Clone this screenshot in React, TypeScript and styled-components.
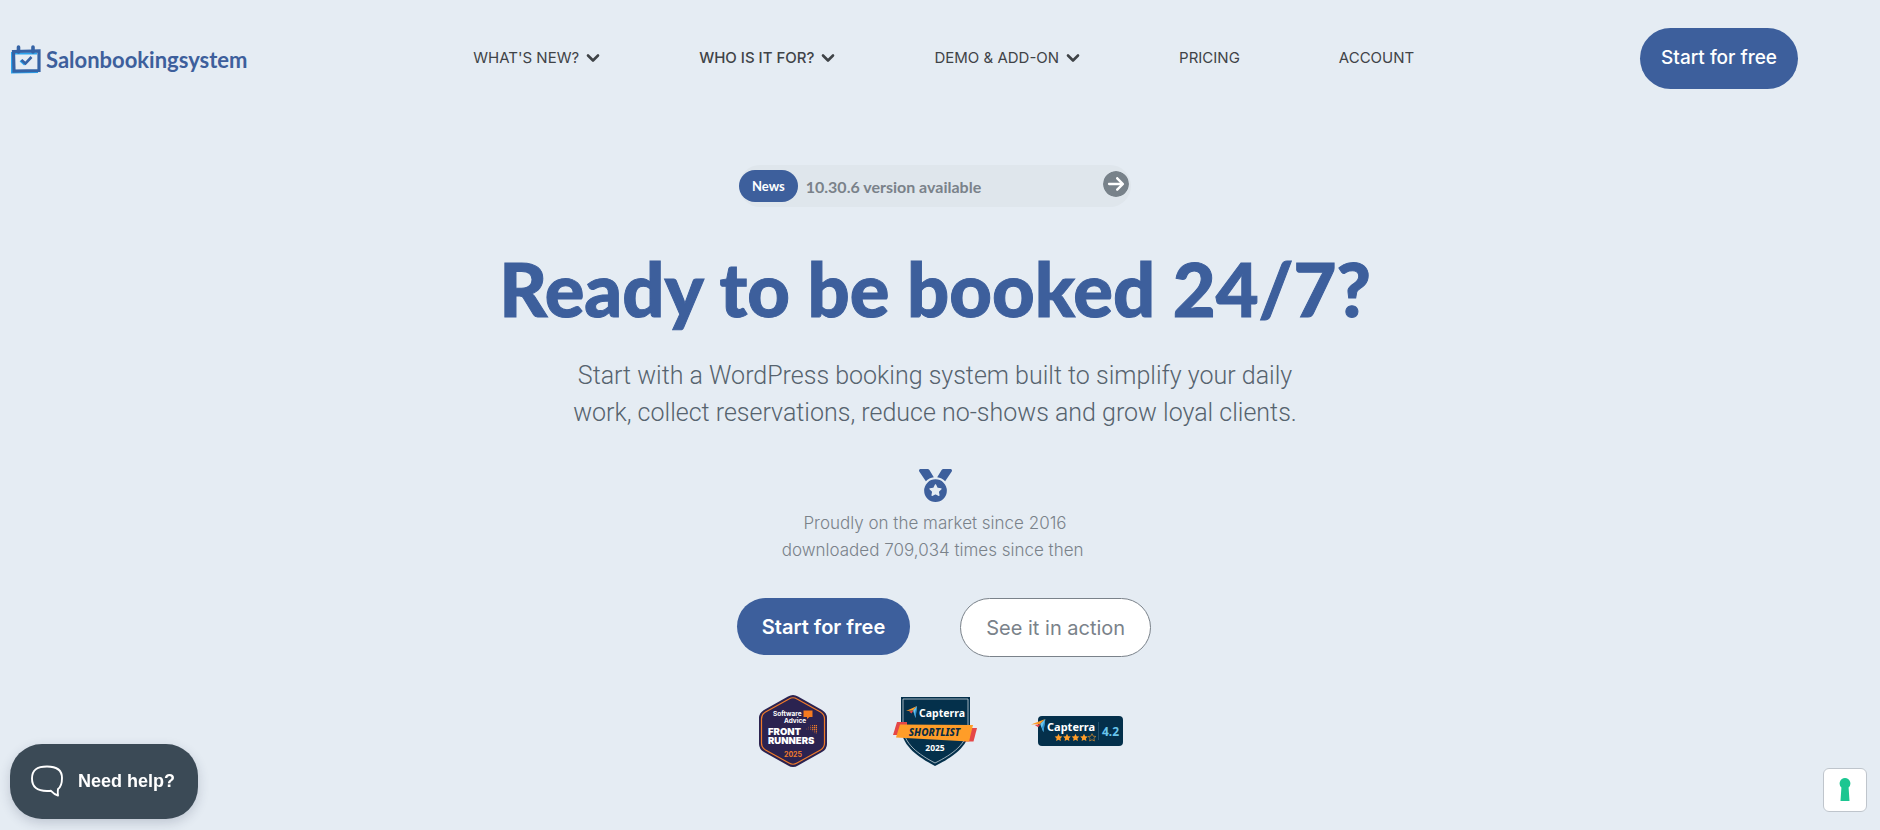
import React from 'react';
import styled, { createGlobalStyle, css } from 'styled-components';
import { FaMedal, FaCircleArrowRight } from 'react-icons/fa6';

const color = {
  page: '#e5ecf3',
  brand: '#3d5f9c',
  ink: '#3f4347',
  muted: '#7a828a',
  slate: '#3b4a56',
};

const GlobalStyle = createGlobalStyle`
  *, *::before, *::after { box-sizing: border-box; }
  html { background: ${color.page}; }
  body { margin: 0; font-family: Inter, sans-serif; color: ${color.ink}; }
  a { color: inherit; text-decoration: none; }
  button { font-family: inherit; cursor: pointer; }
  h1, p, ul { margin: 0; padding: 0; }
`;

const Header = styled.header`
  display: flex;
  align-items: center;
  justify-content: space-between;
  padding: 28px 82px 0 10px;
`;

const Logo = styled.a`
  display: flex;
  align-items: center;
  gap: 4px;
  color: ${color.brand};
  font: 700 22px/32px Lato, sans-serif;
`;

const LogoText = styled.span`
  padding-top: 3px;
`;

const Menu = styled.ul`
  display: flex;
  gap: 99px;
  padding-bottom: 2px;
  list-style: none;
`;

const MenuLink = styled.a<{ $active?: boolean }>`
  display: flex;
  align-items: center;
  gap: 7px;
  font-size: 15px;
  line-height: 20px;
  font-weight: ${p => (p.$active ? 500 : 400)};
`;

const PillButton = styled.button<{ $variant?: 'header' | 'solid' | 'outline' }>`
  border: 0;
  border-radius: 31px;
  background: ${color.brand};
  color: #fff;
  white-space: nowrap;
  ${p =>
    p.$variant === 'header' &&
    css`
      padding: 0 21px 2px;
      font-size: 19px;
      font-weight: 500;
      line-height: 59px;
    `}
  ${p =>
    p.$variant === 'solid' &&
    css`
      padding: 1px 25px 0;
      font-size: 20px;
      font-weight: 600;
      line-height: 56px;
    `}
  ${p =>
    p.$variant === 'outline' &&
    css`
      padding: 1px 25px 0;
      border: 1px solid ${color.muted};
      background: #fff;
      color: ${color.muted};
      font-size: 20px;
      font-weight: 400;
      line-height: 56px;
    `}
`;

const Hero = styled.main`
  display: flex;
  flex-direction: column;
  align-items: center;
  padding: 76px 10px 60px 0;
  text-align: center;
`;

const NewsBar = styled.a`
  display: flex;
  align-items: center;
  width: 392px;
  height: 42px;
  padding-right: 2px;
  border-radius: 21px;
  background: #dfe6ec;
  color: ${color.muted};
  font: 700 16px/20px Lato, sans-serif;
`;

const NewsTag = styled.span`
  margin-right: 8px;
  padding: 0 13px;
  border-radius: 16px;
  background: ${color.brand};
  color: #fff;
  font-size: 13px;
  line-height: 32px;
`;

const NewsText = styled.span`
  padding-top: 2px;
`;

const NewsArrow = styled(FaCircleArrowRight)`
  width: 26px;
  height: 26px;
  margin: 0 0 4px auto;
  border-radius: 50%;
  background: radial-gradient(#fff 60%, transparent 61%);
  color: #78828a;
`;

const Title = styled.h1`
  margin-top: 42px;
  color: ${color.brand};
  font: 900 74px/80px Lato, sans-serif;
  -webkit-text-stroke: 1px ${color.brand};
`;

const Lead = styled.p`
  max-width: 760px;
  margin-top: 28px;
  color: #56636e;
  font: 300 25px/37px Roboto, sans-serif;
`;

const Medal = styled(FaMedal)`
  width: 33px;
  height: 33px;
  margin-top: 38px;
  color: ${color.brand};
`;

const Proof = styled.p`
  margin-top: 8px;
  color: ${color.muted};
  font-size: 17px;
  font-weight: 300;
  line-height: 27px;
`;

const Actions = styled.div`
  display: flex;
  align-items: flex-start;
  gap: 50px;
  margin-top: 34px;
  padding-left: 18px;
`;

const Awards = styled.div`
  display: grid;
  grid-template-columns: repeat(3, 142px);
  place-items: center;
  margin-top: 37px;

  svg { display: block; }
`;

const HelpButton = styled.button`
  position: fixed;
  left: 10px;
  bottom: 11px;
  display: flex;
  align-items: center;
  gap: 15px;
  height: 75px;
  padding: 0 23px 2px 21px;
  border: 0;
  border-radius: 32px;
  background: ${color.slate};
  box-shadow: 0 4px 12px rgba(40, 50, 80, 0.2);
  color: #fff;
  font: 700 18px/24px 'Liberation Sans', sans-serif;
`;

const PrivacyButton = styled.button`
  position: fixed;
  right: 13px;
  bottom: 18px;
  display: grid;
  place-items: center;
  width: 44px;
  height: 44px;
  padding: 0;
  border: 1px solid #bfc5cc;
  border-radius: 6px;
  background: #fff;
`;

const CalendarMark = () => (
  <svg width="32" height="32" viewBox="0 0 32 32" fill="none" aria-hidden="true">
    <path d="M2.500 9V29L28 28.500" stroke="#2ba4ee" strokeWidth="3" />
    <path d="M5 10.500H27" stroke="#2ba4ee" strokeWidth="2" />
    <path d="M3.500 8.500L29 8V27.500L4 28Z" stroke="#3563a5" strokeWidth="3.200" />
    <path d="M8.500 4v5M23 4v5" stroke="#3563a5" strokeWidth="3.600" strokeLinecap="round" />
    <path d="M10.500 17.500l4.500 4" stroke="#2ba4ee" strokeWidth="2.600" />
    <path d="M11.500 17l4 3.500 6-6.500" stroke="#3563a5" strokeWidth="2.600" />
  </svg>
);

const Chevron = () => (
  <svg width="14" height="10" viewBox="0 0 14 10" fill="none" aria-hidden="true">
    <path d="M2 2.500l5 5 5-5" stroke={color.ink} strokeWidth="2.600" strokeLinecap="round" strokeLinejoin="round" />
  </svg>
);

const dots = [
  [6, 0, 1], [9, 0, 1.5], [12, 0, 2], [15, 0, 2], [3, 3, 1], [6, 3, 1.5], [9, 3, 2], [12, 3, 2], [15, 3, 2],
  [0, 6, 1], [3, 6, 1], [6, 6, 1.5], [9, 6, 2], [12, 6, 2], [15, 6, 2], [9, 9, 1], [12, 9, 1.5], [15, 9, 2], [12, 12, 1], [15, 12, 1.5],
];

const FrontRunnersBadge = () => (
  <svg width="70" height="74" viewBox="0 0 70 74" role="img" aria-label="Software Advice Front Runners 2025">
    <path d="M30 2.500Q35-.5 40 2.500L64 16Q69 19 69 24V50Q69 55 64 58L40 71.500Q35 74.500 30 71.500L6 58Q1 55 1 50V24Q1 19 6 16Z" fill="#2b2350" />
    <path d="M31 5Q35 2.500 39 5L62.500 18Q66.500 20.500 66.500 25V49Q66.500 53.500 62.500 56L39 69Q35 71.500 31 69L7.500 56Q3.500 53.500 3.500 49V25Q3.500 20.500 7.500 18Z" fill="none" stroke="#ef7b2a" strokeWidth="1.200" />
    <g fill="#fff" fontFamily="Inter, sans-serif" fontWeight="700">
      <text x="15" y="22" fontSize="6.500">Software</text>
      <text x="26" y="29" fontSize="6.500">Advice</text>
      <text x="10" y="41" fontSize="9.500" fontWeight="900">FRONT</text>
      <text x="10" y="49.500" fontSize="9.500" fontWeight="900">RUNNERS</text>
      <text x="35" y="63" fontSize="7" textAnchor="middle" fill="#ef7b2a">2025</text>
    </g>
    <path d="M45.500 16.500h9v6.500h-3l-2.500 2v-2h-3.500z" fill="#f47b20" />
    <g transform="translate(48.500 31) scale(.62)" fill="#ef7b2a">
      {dots.map(([x, y, s]) => (
        <rect key={`${x}-${y}`} x={x} y={y} width={s} height={s} />
      ))}
    </g>
  </svg>
);

const CapterraArrow = () => (
  <>
    <path d="M0 5L11 0 7 4.500z" fill="#ff9d28" />
    <path d="M7 4.500L11 0 9.500 12z" fill="#68c5ed" />
    <path d="M11 0L9.500 12 8.500 7.500z" fill="#2b8fd0" />
    <path d="M3 5.500L7.500 4.500 5.500 7.500z" fill="#e54747" />
  </>
);

const ShortlistBadge = () => (
  <svg width="84" height="70" viewBox="0 0 84 70" role="img" aria-label="Capterra Shortlist 2025">
    <path d="M8 1H77V30C77 50 60 61 42 70C25 61 8 50 8 30Z" fill="#04304b" />
    <path d="M10 3H75V30C75 48 59 58.500 42 67C26 58.500 10 48 10 30Z" fill="none" stroke="#c5d0d8" strokeWidth=".8" />
    <path d="M4 26H14V39H0Z" fill="#e54747" />
    <path d="M84 32L80.500 45.500H71L74 32Z" fill="#e54747" />
    <path d="M7 28.500L80 29 76 45.500 3 41.500Z" fill="#ff9d28" />
    <g transform="translate(13 10)"><CapterraArrow /></g>
    <g fontFamily="'Noto Sans', sans-serif" fontWeight="700" fill="#fff">
      <text x="26" y="20.500" fontSize="10.500">Capterra</text>
      <text x="41.500" y="40" fontSize="10" fontWeight="800" fontStyle="italic" textAnchor="middle" fill="#0b2c44">SHORTLIST</text>
      <text x="42" y="55" fontSize="8.500" textAnchor="middle">2025</text>
    </g>
  </svg>
);

const star = 'M0-3.800L1.200-1.300 3.800-1 1.900.9 2.400 3.500 0 2.200-2.400 3.500-1.900.9-3.800-1-1.200-1.300Z';

const RatingBadge = () => (
  <svg width="92" height="31" viewBox="0 0 92 31" role="img" aria-label="Capterra rating 4.2">
    <rect x="7" y="0" width="85" height="30" rx="4" fill="#04304b" />
    <g transform="translate(0 3)"><g transform="scale(1.300 1.100)"><CapterraArrow /></g></g>
    <g fontFamily="'Noto Sans', sans-serif" fontWeight="700">
      <text x="16" y="14.500" fontSize="11" fill="#fff">Capterra</text>
      <text x="79.500" y="19.500" fontSize="12" textAnchor="middle" fill="#68c5ed">4.2</text>
    </g>
    <path d="M67.500 6v18" stroke="#24506b" />
    {[27.5, 36, 44.5, 53].map(x => (
      <path key={x} d={star} transform={`translate(${x} 21.500)`} fill="#ff9d28" />
    ))}
    <path d={star} transform="translate(61 21.500)" fill="none" stroke="#ff9d28" strokeWidth=".6" />
  </svg>
);

const SpeechBubble = () => (
  <svg width="32" height="32" viewBox="0 0 32 32" fill="none" aria-hidden="true">
    <path
      d="M16 1.500C25 1.500 31 4 31 13C31 19 30 22 27 24C26.500 26.500 26.800 28.500 27 30.500C24 29.500 22 28 20 25.800C18.500 26 17.500 26 16 26C6 26 1 22 1 13.500C1 4 7 1.500 16 1.500Z"
      stroke="#fff"
      strokeWidth="1.900"
      strokeLinejoin="round"
    />
  </svg>
);

const Keyhole = () => (
  <svg width="12" height="24" viewBox="0 0 12 24" aria-hidden="true">
    <path d="M6 0a5.500 5.500 0 0 1 3.600 9.500L10.500 23h-9L2.400 9.500A5.500 5.500 0 0 1 6 0z" fill="#1cc691" />
  </svg>
);

const menu = [
  { label: "WHAT'S NEW?", sub: true },
  { label: 'WHO IS IT FOR?', sub: true, active: true },
  { label: 'DEMO & ADD-ON', sub: true },
  { label: 'PRICING' },
  { label: 'ACCOUNT' },
];

export default function App() {
  return (
    <>
      <GlobalStyle />
      <Header>
        <Logo href="#">
          <CalendarMark />
          <LogoText>Salonbookingsystem</LogoText>
        </Logo>
        <nav>
          <Menu>
            {menu.map(item => (
              <li key={item.label}>
                <MenuLink href="#" $active={item.active}>
                  {item.label}
                  {item.sub && <Chevron />}
                </MenuLink>
              </li>
            ))}
          </Menu>
        </nav>
        <PillButton $variant="header">Start for free</PillButton>
      </Header>
      <Hero>
        <NewsBar href="#">
          <NewsTag>News</NewsTag>
          <NewsText>10.30.6 version available</NewsText>
          <NewsArrow />
        </NewsBar>
        <Title>Ready to be booked 24/7?</Title>
        <Lead>
          Start with a WordPress booking system built to simplify your daily work, collect
          reservations, reduce no-shows and grow loyal clients.
        </Lead>
        <Medal />
        <Proof>
          Proudly on the market since 2016
          <br />
          downloaded 709,034 times since then&nbsp;
        </Proof>
        <Actions>
          <PillButton $variant="solid">Start for free</PillButton>
          <PillButton $variant="outline">See it in action</PillButton>
        </Actions>
        <Awards>
          <FrontRunnersBadge />
          <ShortlistBadge />
          <RatingBadge />
        </Awards>
      </Hero>
      <HelpButton>
        <SpeechBubble />
        Need help?
      </HelpButton>
      <PrivacyButton aria-label="Privacy preferences">
        <Keyhole />
      </PrivacyButton>
    </>
  );
}
